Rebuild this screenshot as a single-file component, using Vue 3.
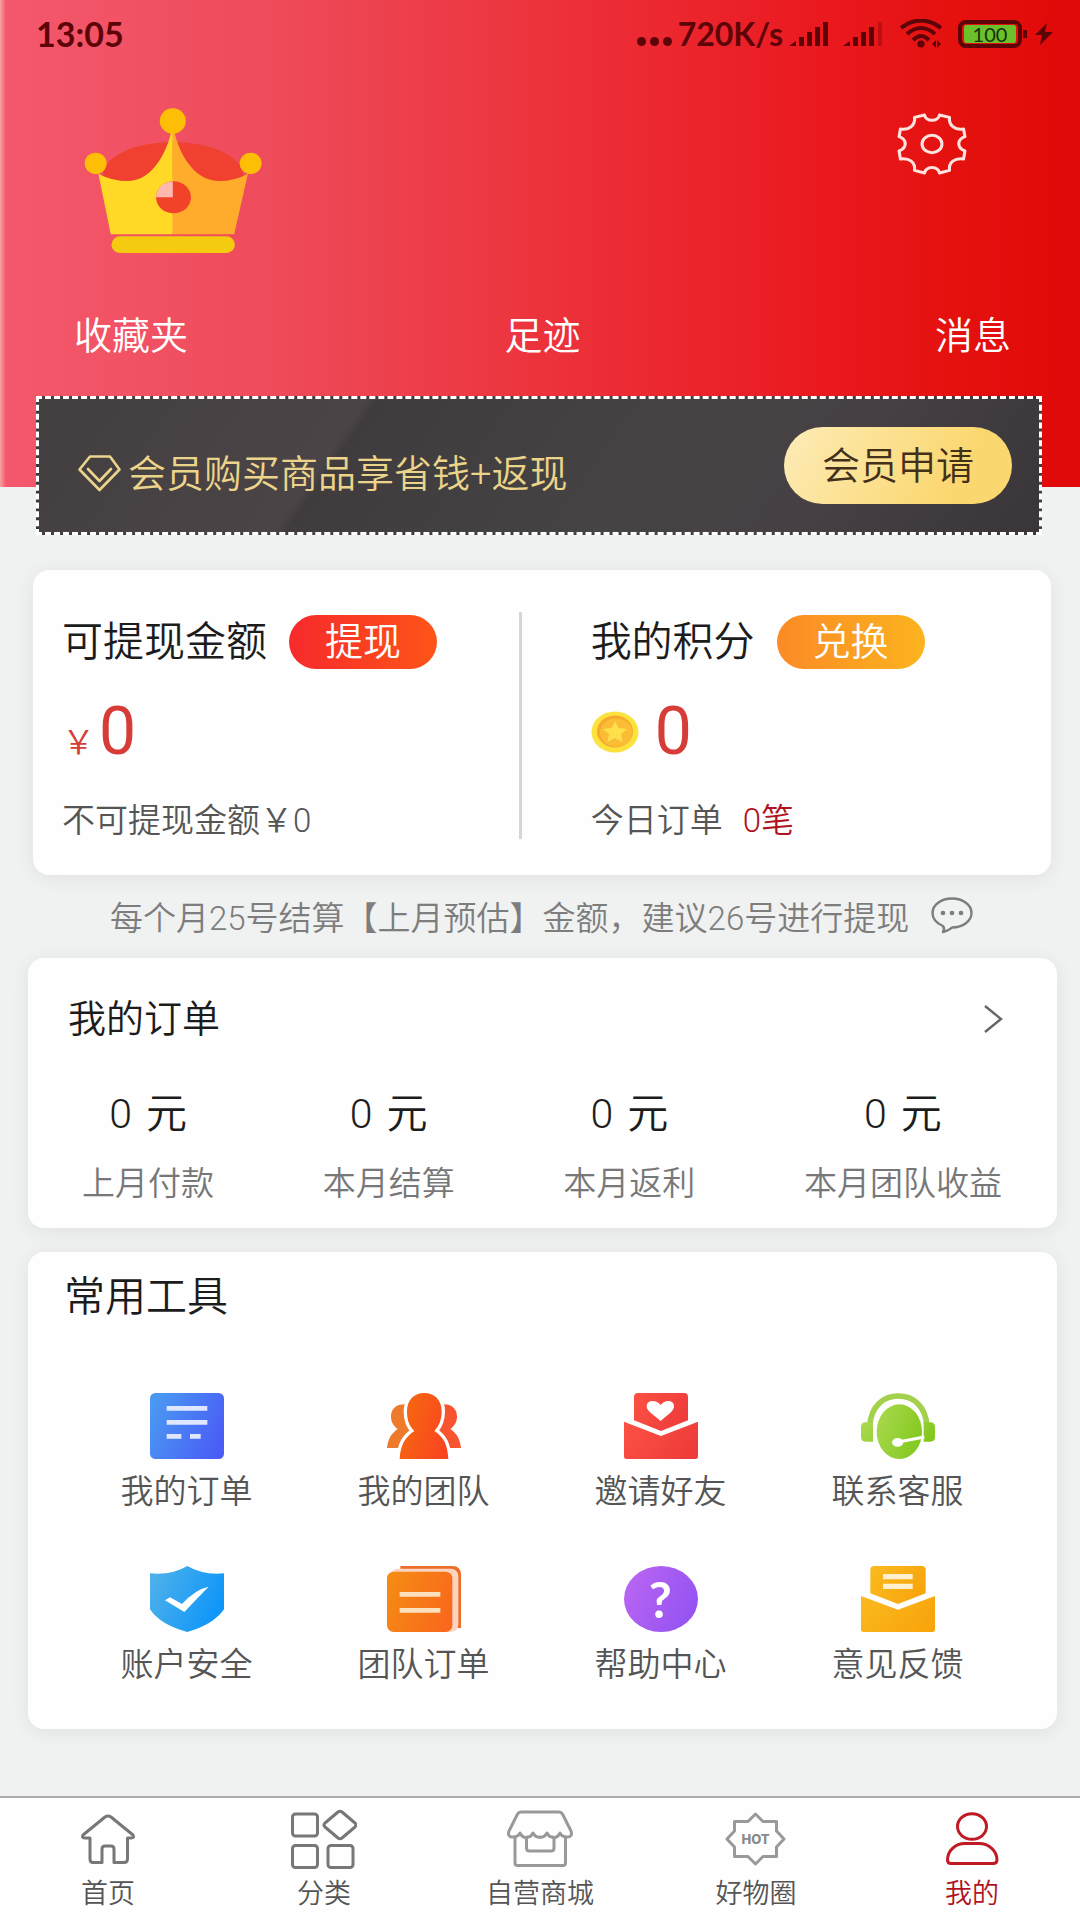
<template>
  <div class="page">
    <header class="hero">
      <div class="status-bar">
        <span class="clock">13:05</span>
        <div class="status-right">
          <svg width="36" height="24" viewBox="0 0 36 24">
            <circle cx="4.5" cy="19.5" r="4.5" />
            <circle cx="17.5" cy="19.5" r="4.5" />
            <circle cx="30.5" cy="19.5" r="4.5" />
          </svg>
          <span class="speed">720K/s</span>
          <svg class="signal" width="40" height="26" viewBox="0 0 40 26">
            <path d="M0 25 L7 20 V25 Z M10 16 h5 v9 h-5 Z M18 11 h5 v14 h-5 Z M26 6 h5 v19 h-5 Z M34 1 h5 v24 h-5 Z" />
          </svg>
          <svg class="signal second" width="40" height="26" viewBox="0 0 40 26">
            <path d="M0 25 L7 20 V25 Z M10 16 h5 v9 h-5 Z M18 11 h5 v14 h-5 Z M26 6 h5 v19 h-5 Z" />
            <path d="M35 1 h4 v24 h-4 Z" opacity="0.3" />
          </svg>
          <svg class="wifi" width="42" height="30" viewBox="0 0 42 30">
            <g fill="none" stroke="#5c0407" stroke-width="4">
              <path d="M1 9 Q21 -6 41 9" />
              <path d="M7 15 Q21 3 35 15" />
              <path d="M13 21 Q21 13 29 21" />
            </g>
            <circle cx="21" cy="25" r="3.6" />
            <path d="M32 25 l4 -4 v8 Z M41 25 l-4 -4 v8 Z" />
          </svg>
          <div class="battery"><span>100</span></div>
          <svg class="bolt" width="20" height="22" viewBox="0 0 20 22">
            <path d="M13 0 L1 12 H8 L6 22 L19 9 H11 Z" />
          </svg>
        </div>
      </div>

      <div class="profile">
        <svg width="179" height="148" viewBox="0 0 522 444" preserveAspectRatio="none">
          <ellipse cx="259" cy="205" rx="204" ry="100" fill="#ef4030" />
          <path d="M42 200 Q80 222 130 222 C200 222 245 130 255 70 H259 V382 H78 Z" fill="#ffd925" />
          <path d="M478 200 Q440 222 392 222 C318 222 273 130 263 70 H259 V382 H438 Z" fill="#ffab2b" />
          <circle cx="259" cy="42" r="38" fill="#fdbf05" />
          <circle cx="34" cy="169" r="32" fill="#fdbf05" />
          <circle cx="486" cy="169" r="32" fill="#fdbf05" />
          <rect x="80" y="388" width="360" height="50" rx="25" fill="#f4cb0e" />
          <ellipse cx="261" cy="271" rx="51" ry="48" fill="#f0432a" />
          <path d="M259 271 H210 Q214 228 259 223 Z" fill="#ffb8ae" />
        </svg>
        <button class="settings" type="button" aria-label="设置">
          <svg width="70" height="62" viewBox="0 0 204 186" preserveAspectRatio="none">
            <g fill="none" stroke="#ffe3de" stroke-width="9" stroke-linejoin="round">
              <path d="M80 6 C84 27 120 27 124 6 L153 13 C150 36 168 52 194 48 L198 71 C174 80 174 104 198 114 L194 138 C168 134 150 148 153 172 L124 180 C118 158 86 158 80 180 L51 172 C54 148 36 134 10 138 L6 114 C30 104 30 80 6 71 L10 48 C36 52 54 36 51 13 Z" />
              <ellipse cx="102" cy="93" rx="29" ry="26" />
            </g>
          </svg>
        </button>
      </div>

      <nav class="shortcuts">
        <a v-for="name in shortcuts" :key="name" href="#">{{ name }}</a>
      </nav>
    </header>

    <section class="member">
      <div class="slogan">
        <svg width="43" height="37" viewBox="0 0 43 37">
          <g fill="none" stroke="#ecd48a" stroke-width="2.6" stroke-linejoin="round" stroke-linecap="round">
            <path d="M12 1.5 H32 L41.5 14.5 L21.5 35 L1.5 14.5 Z" />
            <path d="M10 14 L21.5 26 L33 14" />
          </g>
        </svg>
        <span>会员购买商品享省钱+返现</span>
      </div>
      <button class="apply" type="button">会员申请</button>
    </section>

    <section class="card wallet">
      <div class="wallet-col">
        <div class="wallet-head">
          <h2>可提现金额</h2>
          <button class="pill withdraw" type="button">提现</button>
        </div>
        <div class="amount"><small>￥</small>0</div>
        <div class="wallet-foot">不可提现金额￥0</div>
      </div>
      <div class="wallet-col">
        <div class="wallet-head">
          <h2>我的积分</h2>
          <button class="pill exchange" type="button">兑换</button>
        </div>
        <div class="amount">
          <svg class="coin" width="48" height="42" viewBox="0 0 48 42">
            <ellipse cx="24" cy="21" rx="23.5" ry="20.5" fill="#fbe23c" />
            <ellipse cx="24" cy="20.5" rx="18" ry="16" fill="#f6a92c" />
            <ellipse cx="25" cy="21.5" rx="16" ry="14" fill="#fbbd36" />
            <path d="M24 10 L27.5 17 L36 18 L30 23 L31.5 31 L24 27 L16.5 31 L18 23 L12 18 L20.500 17 Z" fill="#ffe04a" />
          </svg>
          0
        </div>
        <div class="wallet-foot">今日订单<em>0笔</em></div>
      </div>
    </section>

    <p class="notice">
      <span>每个月25号结算【上月预估】金额，建议26号进行提现</span>
      <svg width="42" height="44" viewBox="0 0 42 44">
        <path
          d="M12 29 C5 26 1.500 21.500 1.500 16 C1.500 8 10 1.500 21 1.500 S40.500 8 40.500 16 S32 30.500 21 30.500 Q18 33.500 12 35 Q14 32 12 29 Z"
          fill="none" stroke="#7d7d7d" stroke-width="2.4" stroke-linejoin="round"
        />
        <circle cx="12" cy="16" r="2.3" fill="#7d7d7d" />
        <circle cx="21" cy="16" r="2.3" fill="#7d7d7d" />
        <circle cx="30" cy="16" r="2.3" fill="#7d7d7d" />
      </svg>
    </p>

    <section class="card orders">
      <div class="orders-head">
        <h2>我的订单</h2>
        <a href="#" aria-label="查看全部">
          <svg width="20" height="30" viewBox="0 0 20 30">
            <path d="M2 2 L18 15 L2 28" fill="none" stroke="#666" stroke-width="2.4" />
          </svg>
        </a>
      </div>
      <ul class="stats">
        <li v-for="item in stats" :key="item.label">
          <div class="stat-value"><span>{{ item.value }}</span><span>元</span></div>
          <div class="stat-label">{{ item.label }}</div>
        </li>
      </ul>
    </section>

    <section class="card tools">
      <h2>常用工具</h2>
      <div class="tool-grid">
        <a v-for="tool in tools" :key="tool.icon" href="#" class="tool">
          <svg width="74" height="66" viewBox="0 0 222 198">
            <defs>
              <linearGradient :id="'tool-' + tool.icon" x1="0" y1="0.3" x2="1" y2="0.7">
                <stop offset="0" :stop-color="tool.from" />
                <stop offset="1" :stop-color="tool.to" />
              </linearGradient>
            </defs>
            <g v-if="tool.icon === 'order'">
              <rect width="222" height="198" rx="16" :fill="fill(tool)" />
              <path d="M50 46 H172 M50 88 H172 M50 130 H94 M120 130 H152" stroke="#dfe6ff" stroke-width="14" />
            </g>
            <g v-else-if="tool.icon === 'team'" :fill="fill(tool)">
              <path d="M0 165 C3 138 12 122 32 108 C18 98 12 86 12 70 C12 48 28 34 52 34 H90 V165 Z" fill="#ee7a2c" />
              <path d="M222 165 C219 138 210 122 190 108 C204 98 210 86 210 70 C210 48 194 34 170 34 H132 V165 Z" fill="#f7542f" />
              <path
                d="M38 200 C40 155 55 132 82 114 C66 100 60 80 60 55 C60 20 82 0 112 0 C142 0 164 20 164 55 C164 80 156 100 142 114 C170 132 182 155 184 200 Z"
                stroke="#fff" stroke-width="20"
              />
              <path d="M38 198 C40 155 55 132 82 114 C66 100 60 80 60 55 C60 20 82 0 112 0 C142 0 164 20 164 55 C164 80 156 100 142 114 C170 132 182 155 184 198 Z" />
            </g>
            <g v-else-if="tool.icon === 'invite'" :fill="fill(tool)">
              <path d="M30 82 V12 Q30 0 42 0 H180 Q192 0 192 12 V82 L111 114 Z" />
              <path d="M0 86 L111 129 L222 86 V190 Q222 198 214 198 H8 Q0 198 0 190 Z" />
              <path d="M110 84 C92 68 68 56 68 40 C68 22 96 18 110 36 C124 18 150 22 150 40 C150 56 128 68 110 84 Z" fill="#fff" />
            </g>
            <g v-else-if="tool.icon === 'service'" :fill="fill(tool)">
              <path d="M26 100 C30 40 66 9 112 9 S194 40 198 100" fill="none" stroke="#a3d14c" stroke-width="17" />
              <path d="M36 88 V146 H14 Q0 146 0 132 V102 Q0 88 14 88 Z M188 88 V146 H208 Q222 146 222 132 V102 Q222 88 208 88 Z" />
              <ellipse cx="115" cy="116" rx="68" ry="82" />
              <path d="M108 148 L190 132" stroke="#fff" stroke-width="9" />
              <ellipse cx="110" cy="148" rx="17" ry="13" fill="#fff" />
            </g>
            <g v-else-if="tool.icon === 'safe'">
              <path d="M0 22 Q66 28 112 0 Q160 28 222 22 V130 Q190 176 112 198 Q30 176 0 130 Z" :fill="fill(tool)" />
              <path d="M45 103 L60 94 L96 114 Q136 70 176 62 Q146 92 103 138 Z" fill="#fff" />
            </g>
            <g v-else-if="tool.icon === 'team-order'">
              <path d="M40 0 H196 Q222 0 222 26 V186 H150 V20 H40 Z" fill="#e96f2a" />
              <rect x="10" y="8" width="204" height="190" rx="22" fill="#ffd3bd" />
              <rect y="17" width="196" height="181" rx="20" :fill="fill(tool)" />
              <path d="M38 85 H160 M38 133 H160" stroke="#ffe0bd" stroke-width="14" />
            </g>
            <g v-else-if="tool.icon === 'help'">
              <ellipse cx="111" cy="99" rx="111" ry="99" :fill="fill(tool)" />
              <text x="109" y="156" class="question">?</text>
            </g>
            <g v-else :fill="fill(tool)">
              <path d="M28 82 V12 Q28 0 40 0 H182 Q194 0 194 12 V82 L111 114 Z" />
              <path d="M0 90 L111 131 L222 90 V190 Q222 198 214 198 H8 Q0 198 0 190 Z" />
              <path d="M66 32 H155 M66 61 H155" stroke="#fff1cf" stroke-width="16" />
            </g>
          </svg>
          <span>{{ tool.name }}</span>
        </a>
      </div>
    </section>

    <nav class="tab-bar">
      <a v-for="tab in tabs" :key="tab.icon" href="#" class="tab" :class="{ active: tab.icon === 'mine' }">
        <svg width="66" height="60" viewBox="0 0 66 60">
          <path
            v-if="tab.icon === 'home'"
            d="M30 8 Q33 6 36 8 L58 26 Q60 29 56 29 H52.500 V50 Q52.500 53.500 49 53.500 H39 V40 Q39 37 36 37 H30 Q27 37 27 40 V53.500 H18 Q15 53.500 15 50 V29 H10 Q6 29 8 26 Z"
          />
          <g v-else-if="tab.icon === 'category'">
            <rect x="1.500" y="5" width="25" height="22" rx="3" />
            <rect x="1.500" y="36.500" width="25" height="22" rx="3" />
            <rect x="37" y="36.500" width="25" height="22" rx="3" />
            <path d="M47 3 Q49 1.500 51 3 L64 14 Q66 16 64 18 L51 29 Q49 30.500 47 29 L34 18 Q32 16 34 14 Z" />
          </g>
          <g v-else-if="tab.icon === 'shop'" class="soft">
            <path d="M14 3 H52 Q54.500 3 56 6 L64 22 Q66 28 60 28 Q55 28 53 24 Q50 30 45 28 Q42 28 40 24 Q37 29 33 28 Q29 29 26 24 Q24 28 21 28 Q16 30 13 24 Q11 28 6 28 Q0 28 2 22 L10 6 Q11.500 3 14 3 Z" />
            <path d="M8 29 V54 Q8 56.500 10.500 56.500 H56 Q58.500 56.500 58.500 54 V29" />
            <path d="M19.500 29 V39 Q19.500 42 22.500 42 H44 Q47 42 47 39 V29" />
          </g>
          <g v-else-if="tab.icon === 'hot'" class="soft">
            <path d="M32.500 5 L40 12.500 H53.500 V22 L61 30 L53.500 38 V47.500 H40 L32.500 55 L25 47.500 H11.500 V38 L4 30 L11.500 22 V12.500 H25 Z" />
            <text x="32.500" y="34.500" class="hot">HOT</text>
          </g>
          <g v-else>
            <ellipse cx="33" cy="17.500" rx="14.500" ry="12.800" />
            <path d="M26 34.500 H40 C50 34.500 58 42 58 51 Q58 54.500 54 54.500 H12 Q8.500 54.500 8.500 51 C8.500 42 16 34.500 26 34.500 Z" />
          </g>
        </svg>
        <span>{{ tab.name }}</span>
      </a>
    </nav>
  </div>
</template>

<script setup>
const shortcuts = ['收藏夹', '足迹', '消息']

const stats = [
  { label: '上月付款', value: 0 },
  { label: '本月结算', value: 0 },
  { label: '本月返利', value: 0 },
  { label: '本月团队收益', value: 0 }
]

const tools = [
  { icon: 'order', name: '我的订单', from: '#4a98f2', to: '#4a5cf6' },
  { icon: 'team', name: '我的团队', from: '#f56a10', to: '#fa4420' },
  { icon: 'invite', name: '邀请好友', from: '#fb4f42', to: '#ee3b3b' },
  { icon: 'service', name: '联系客服', from: '#a8d84c', to: '#82c81e' },
  { icon: 'safe', name: '账户安全', from: '#4cb0ea', to: '#0a94fb' },
  { icon: 'team-order', name: '团队订单', from: '#f58a14', to: '#f9681c' },
  { icon: 'help', name: '帮助中心', from: '#b865f2', to: '#9452f2' },
  { icon: 'feedback', name: '意见反馈', from: '#f9b81c', to: '#f9a40c' }
]

const tabs = [
  { icon: 'home', name: '首页' },
  { icon: 'category', name: '分类' },
  { icon: 'shop', name: '自营商城' },
  { icon: 'hot', name: '好物圈' },
  { icon: 'mine', name: '我的' }
]

const fill = (tool) => `url(#tool-${tool.icon})`
</script>

<style>
body {
  background: #f0f1f1;
}
</style>

<style scoped>
.page {
  display: flex;
  flex-direction: column;
  min-height: 100vh;
  font-family: Roboto, "Noto Sans CJK SC", sans-serif;
  font-weight: 350;
  font-size: 33px;
  line-height: 44px;
  color: #555;
}

.page svg {
  display: block;
  flex-shrink: 0;
}

a {
  color: inherit;
  text-decoration: none;
}

button {
  border: none;
  padding: 0;
  font: inherit;
  cursor: pointer;
}

h2 {
  margin: 0;
  font-size: 41px;
  font-weight: inherit;
  color: #1c1c1c;
}

/* hero */
.hero {
  padding-bottom: 126px;
  background: linear-gradient(90deg, #f7a3a3 0, #f4586c 6px, #ee4b5b 25%, #ec333c 50%, #eb1b22 74%, #e4110f 88%, #e10909 100%);
}

.status-bar {
  display: flex;
  align-items: center;
  justify-content: space-between;
  height: 68px;
  padding: 0 26px 0 36px;
  font-family: Lato, sans-serif;
  font-weight: 700;
  font-size: 32px;
  color: #5c0407;
  fill: #5c0407;
}

.clock {
  font-size: 34px;
}

.status-right {
  display: flex;
  align-items: center;
}

.speed {
  margin: 0 6px 0 5px;
}

.signal.second {
  margin-left: 14px;
}

.wifi {
  margin-left: 17px;
}

.battery {
  position: relative;
  margin-left: 16px;
  padding: 1px 2px;
  width: 52px;
  height: 18px;
  border: 4px solid #5c0407;
  border-radius: 8px;
  background: #6cc02c content-box;
  font-size: 20px;
  font-weight: 400;
  line-height: 18px;
  text-align: center;
  color: #17300a;
}

.battery::after {
  content: "";
  position: absolute;
  top: 6px;
  right: -9px;
  width: 4px;
  height: 8px;
  background: #5c0407;
}

.bolt {
  margin-left: 12px;
}

.profile {
  display: flex;
  justify-content: space-between;
  padding: 39px 113px 0 84px;
}

.settings {
  align-self: flex-start;
  margin-top: 6px;
  background: none;
}

.shortcuts {
  display: grid;
  grid-template-columns: 1fr auto 1fr;
  margin-top: 56px;
  padding: 0 69px 0 74px;
  font-size: 38px;
  line-height: 50px;
  color: #fff;
}

.shortcuts a:last-child {
  justify-self: end;
}

/* member banner */
.member {
  display: flex;
  justify-content: space-between;
  align-items: center;
  margin: -91px 38px 0 36px;
  padding: 28px 27px 28px 39px;
  border: 3px dashed #fff;
  background: linear-gradient(125deg, #423f40 0, #4b4446 30%, #403c3e 31%, #454344 60%, #464044 78%, #393539 100%);
  font-size: 38px;
}

.slogan {
  display: flex;
  align-items: center;
  gap: 7px;
  padding-top: 16px;
  color: #ecd48a;
}

.apply {
  width: 228px;
  height: 77px;
  border-radius: 39px;
  background: linear-gradient(120deg, #fdecb8, #fbd76f 75%);
  color: #43301a;
}

/* cards */
.card {
  margin: 0 23px 0 28px;
  border-radius: 16px;
  background: #fefefe;
  box-shadow: 0 3px 20px rgba(0, 0, 0, 0.07);
}

.wallet {
  display: grid;
  grid-template-columns: 48% 1fr;
  margin: 35px 29px 0 33px;
  padding: 42px 0 36px;
}

.wallet-col {
  padding: 3px 0 0 69px;
}

.wallet-col:first-child {
  padding-left: 29px;
  border-right: 3px solid #d6d6d6;
}

.wallet-head {
  display: flex;
  align-items: center;
  gap: 22px;
}

.pill {
  width: 148px;
  height: 54px;
  border-radius: 27px;
  font-size: 38px;
  color: #fff;
}

.withdraw {
  background: linear-gradient(90deg, #f72a2c, #fd5418);
}

.exchange {
  background: linear-gradient(90deg, #fb8a26, #fbb41e);
}

.amount {
  display: flex;
  align-items: baseline;
  height: 66px;
  margin-top: 30px;
  font-size: 66px;
  font-weight: 400;
  line-height: 66px;
  color: #d63c38;
}

.amount small {
  margin-right: 4px;
  font-size: 33px;
  font-weight: 350;
  line-height: 33px;
}

.coin {
  align-self: center;
  margin-right: 16px;
}

.wallet-foot {
  margin-top: 38px;
  line-height: 36px;
}

.wallet-foot em {
  margin-left: 20px;
  font-style: normal;
  color: #b0121e;
}

.notice {
  display: flex;
  gap: 22px;
  margin: 0;
  padding: 22px 0 17px 110px;
  color: #7d7d7d;
}

.orders {
  padding: 31px 55px 22px 54px;
}

.orders-head {
  display: flex;
  align-items: center;
  justify-content: space-between;
  margin: 0 -1px 0 -14px;
}

.orders-head h2 {
  font-size: 38px;
  line-height: 60px;
}

.stats {
  display: flex;
  justify-content: space-between;
  margin: 40px 0 0;
  padding: 0;
  list-style: none;
}

.stat-value {
  display: flex;
  justify-content: center;
  gap: 14px;
  font-size: 41px;
  line-height: 50px;
  color: #1c1c1c;
}

.stat-label {
  margin-top: 23px;
  color: #777;
}

.tools {
  margin-top: 24px;
  padding: 15px 41px 42px 40px;
}

.tools h2 {
  margin-left: -4px;
  line-height: 60px;
}

.tool-grid {
  display: grid;
  grid-template-columns: repeat(4, 1fr);
  row-gap: 52px;
  margin-top: 66px;
}

.tool {
  display: flex;
  flex-direction: column;
  align-items: center;
  gap: 11px;
}

.question {
  font-family: Lato, sans-serif;
  font-size: 150px;
  font-weight: 700;
  text-anchor: middle;
  fill: #fff;
}

/* bottom tabs */
.tab-bar {
  display: grid;
  grid-template-columns: repeat(5, 1fr);
  margin-top: auto;
  padding: 11px 0 8px;
  border-top: 2px solid #aaa;
  background: #fefefe;
  font-size: 27px;
  line-height: 36px;
}

.tab {
  display: flex;
  flex-direction: column;
  align-items: center;
  gap: 7px;
}

.tab svg {
  fill: none;
  stroke: #777;
  stroke-width: 3;
  stroke-linejoin: round;
}

.tab .soft {
  stroke: #999;
}

.tab .hot {
  font-family: Inter, sans-serif;
  font-size: 13px;
  font-weight: 800;
  text-anchor: middle;
  fill: #8a8a8a;
  stroke: none;
}

.tab.active {
  color: #b0121e;
}

.tab.active svg {
  stroke: #c01a24;
}
</style>
